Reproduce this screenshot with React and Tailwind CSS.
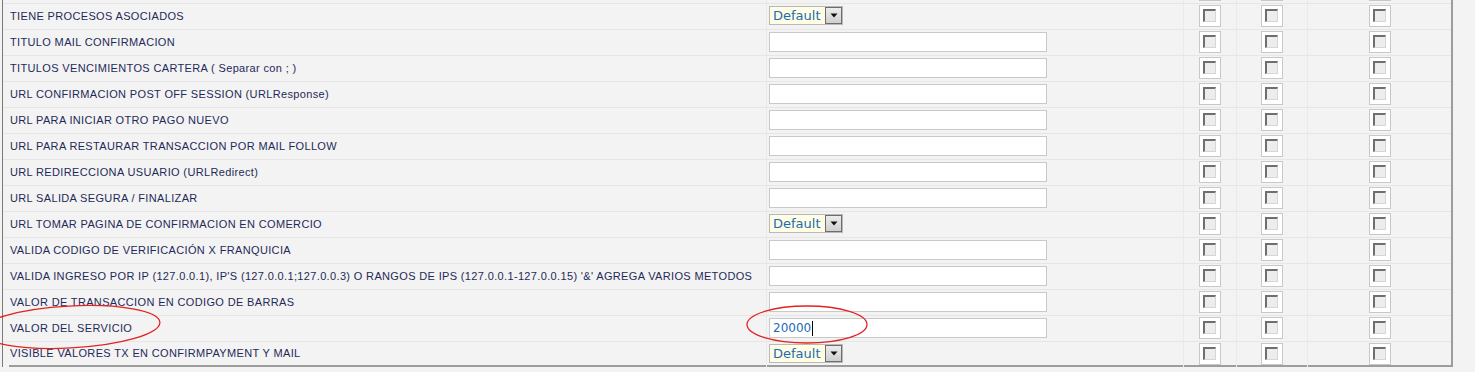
import React from 'react'

// Filas de parámetros del comercio
const rows = [
  { label: '', type: 'none' },
  { label: 'TIENE PROCESOS ASOCIADOS', type: 'select' },
  { label: 'TITULO MAIL CONFIRMACION', type: 'input' },
  { label: 'TITULOS VENCIMIENTOS CARTERA ( Separar con ; )', type: 'input' },
  { label: 'URL CONFIRMACION POST OFF SESSION (URLResponse)', type: 'input' },
  { label: 'URL PARA INICIAR OTRO PAGO NUEVO', type: 'input' },
  { label: 'URL PARA RESTAURAR TRANSACCION POR MAIL FOLLOW', type: 'input' },
  { label: 'URL REDIRECCIONA USUARIO (URLRedirect)', type: 'input' },
  { label: 'URL SALIDA SEGURA / FINALIZAR', type: 'input' },
  { label: 'URL TOMAR PAGINA DE CONFIRMACION EN COMERCIO', type: 'select' },
  { label: 'VALIDA CODIGO DE VERIFICACIÓN X FRANQUICIA', type: 'input' },
  {
    label:
      "VALIDA INGRESO POR IP (127.0.0.1), IP'S (127.0.0.1;127.0.0.3) O RANGOS DE IPS (127.0.0.1-127.0.0.15) '&' AGREGA VARIOS METODOS",
    type: 'input',
  },
  { label: 'VALOR DE TRANSACCION EN CODIGO DE BARRAS', type: 'input' },
  { label: 'VALOR DEL SERVICIO', type: 'input', value: '20000', focus: true },
  { label: 'VISIBLE VALORES TX EN CONFIRMPAYMENT Y MAIL', type: 'select' },
]

function Select() {
  return (
    <div className="mt-[2px] ml-[2px] flex h-[19px] w-[74px] items-center border border-[#b9b9b9] bg-[#fffde3]">
      <span className="flex-1 pl-[3px] text-[13px] leading-none text-[#1b6cb4] [font-family:'DejaVu_Sans',sans-serif]">
        Default
      </span>
      <span className="flex h-[17px] w-[17px] items-center justify-center border border-[#6d6d6d] bg-gradient-to-b from-[#ececec] to-[#cfcfcf]">
        <svg width="8" height="5" viewBox="0 0 8 5">
          <path d="M0.5 0.5 L7.5 0.5 L4 4.5 Z" fill="#111" />
        </svg>
      </span>
    </div>
  )
}

function Input({ value, focus }) {
  return (
    <div className="relative mt-[2px] ml-[2px] flex h-[20px] w-[278px] items-center border border-[#c9c9c9] bg-white pl-[3px]">
      <span className="text-[12px] leading-none text-[#1b6cb4] [font-family:'DejaVu_Sans',sans-serif]">
        {value}
      </span>
      {focus && <span className="ml-[1px] h-[15px] w-px bg-black" />}
    </div>
  )
}

function Check() {
  return (
    <div className="mt-[1px] h-[22px] w-[22px] border border-[#c8c8c8] bg-white pl-[3px] pt-[3px]">
      <div className="h-[13px] w-[13px] border-t-2 border-l-2 border-r border-b border-t-[#6f6f6f] border-l-[#6f6f6f] border-r-[#d6d6d6] border-b-[#d6d6d6] bg-[#ededed]" />
    </div>
  )
}

function Sep() {
  return <div className="w-px self-stretch bg-[#eaeaea]" />
}

export default function App() {
  return (
    <div className="relative h-[372px] w-[1475px] overflow-hidden bg-[#f3f3f3]">
      <div className="ml-[2px] -mt-[23px] w-[1451px] border-l border-r-2 border-l-[#7a7a7a] border-r-[#9d9d9d]">
        {rows.map((row, i) => {
          const last = i === rows.length - 1
          const bottom = last ? 'border-b-2 border-b-[#9d9d9d]' : ''
          return (
            <div key={i} className="flex h-[26px] border-t border-t-[#e6e6e6]">
              <div className="w-[763px] pl-[6px]">
                <div
                  className={`flex h-full items-center pl-[1px] text-[11px] tracking-[0.35px] whitespace-nowrap text-[#1f2a58] [font-family:'Liberation_Sans',Arial,sans-serif] ${bottom}`}
                >
                  {row.label}
                </div>
              </div>
              <Sep />
              <div className={`w-[416px] ${bottom}`}>
                {row.type === 'select' && <Select />}
                {row.type === 'input' && <Input value={row.value} focus={row.focus} />}
              </div>
              <Sep />
              <div className={`flex w-[52px] justify-center ${bottom}`}>
                <Check />
              </div>
              <Sep />
              <div className={`flex w-[70px] justify-center ${bottom}`}>
                <Check />
              </div>
              <Sep />
              <div className={`flex w-[143px] justify-center ${bottom}`}>
                <Check />
              </div>
            </div>
          )
        })}
      </div>

      {/* Marcas rojas de anotación */}
      <svg className="pointer-events-none absolute left-0 top-0" width="1475" height="372">
        <ellipse
          cx="70"
          cy="327"
          rx="90"
          ry="21"
          transform="rotate(-3 70 327)"
          fill="none"
          stroke="#e32222"
          strokeWidth="1.3"
        />
        <ellipse cx="807" cy="324.5" rx="60" ry="18.5" fill="none" stroke="#e32222" strokeWidth="1.3" />
      </svg>
    </div>
  )
}
